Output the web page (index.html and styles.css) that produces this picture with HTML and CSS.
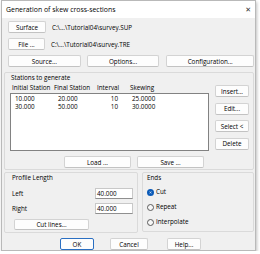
FILE: index.html
```html
<!DOCTYPE html>
<html>

<head>
    <title>Generation of skew cross-sections</title>
    <link rel="stylesheet" href="styles.css">
</head>

<body>
    <div class="window">
        <div class="titlebar">
            <span class="title">Generation of skew cross-sections</span>
            <span class="close">&#x2715;</span>
        </div>
        <div class="content">
            <div class="file-row">
                <button class="btn btn-surface">Surface</button>
                <span class="path">C:\...\Tutorial04\survey.SUP</span>
            </div>
            <div class="file-row">
                <button class="btn btn-file">File ...</button>
                <span class="path">C:\...\Tutorial04\survey.TRE</span>
            </div>
            <div class="tool-row">
                <button class="btn btn-source">Source...</button>
                <button class="btn btn-options">Options...</button>
                <button class="btn btn-config">Configuration...</button>
            </div>

            <div class="group stations">
                <div class="group-label">Stations to generate</div>
                <div class="stations-body">
                    <div class="table">
                        <div class="headers">
                            <span>Initial Station</span>
                            <span>Final Station</span>
                            <span>Interval</span>
                            <span>Skewing</span>
                        </div>
                        <div class="listbox">
                            <div class="list-row">
                                <span>10.000</span>
                                <span>20.000</span>
                                <span class="num">10</span>
                                <span class="skew">25.0000</span>
                            </div>
                            <div class="list-row">
                                <span>30.000</span>
                                <span>50.000</span>
                                <span class="num">10</span>
                                <span class="skew">30.0000</span>
                            </div>
                        </div>
                    </div>
                    <div class="side-buttons">
                        <button class="btn btn-side">Insert...</button>
                        <button class="btn btn-side">Edit...</button>
                        <button class="btn btn-side">Select &lt;</button>
                        <button class="btn btn-side">Delete</button>
                    </div>
                </div>
                <div class="load-save">
                    <button class="btn btn-io">Load ...</button>
                    <button class="btn btn-io">Save ...</button>
                </div>
            </div>

            <div class="lower">
                <div class="group profile">
                    <div class="group-label">Profile Length</div>
                    <div class="field">
                        <span>Left</span>
                        <div class="input">40.000</div>
                    </div>
                    <div class="field">
                        <span>Right</span>
                        <div class="input">40.000</div>
                    </div>
                    <button class="btn btn-cut">Cut lines...</button>
                </div>
                <div class="group ends">
                    <div class="group-label">Ends</div>
                    <label class="radio checked"><span class="dot"></span>Cut</label>
                    <label class="radio"><span class="dot"></span>Repeat</label>
                    <label class="radio"><span class="dot"></span>Interpolate</label>
                </div>
            </div>

            <div class="dialog-buttons">
                <button class="btn btn-ok">OK</button>
                <button class="btn btn-cancel">Cancel</button>
                <button class="btn btn-help">Help...</button>
            </div>
        </div>
    </div>
</body>

</html>
```

FILE: styles.css
```css
body {
    margin: 0;
    background-color: #ffffff;
    font-family: "Open Sans", "Liberation Sans", sans-serif;
    font-size: 6.3px;
    color: #000;
}

.window {
    box-sizing: border-box;
    width: 255px;
    height: 251px;
    margin-left: 1px;
    border: 1px solid #b9b9b9;
    background-color: #f0f0f0;
    box-shadow: 1px 2px 3px rgba(0, 0, 0, 0.25);
    display: flex;
    flex-direction: column;
}

.titlebar {
    height: 17px;
    background-color: #ffffff;
    display: flex;
    align-items: center;
    justify-content: space-between;
    padding: 0 4px 0 4px;
}

.title {
    font-size: 6.9px;
}

.close {
    font-size: 7px;
    color: #333;
    font-family: "DejaVu Sans", sans-serif;
}

.content {
    padding: 0 1px 0 2px;
}

.btn {
    box-sizing: border-box;
    height: 12px;
    padding: 0;
    font-family: inherit;
    font-size: 6.3px;
    color: #000;
    background-color: #fdfdfd;
    border: 1px solid #d3d3d3;
    border-bottom-color: #c2c2c2;
    border-radius: 2px;
}

.file-row {
    display: flex;
    align-items: center;
    margin: 3px 0 0 4px;
}

.file-row + .file-row {
    margin-top: 5px;
}

.btn-surface {
    width: 38px;
}

.btn-file {
    width: 37px;
}

.path {
    margin-left: 6px;
}

.tool-row {
    display: flex;
    margin: 5px 0 0 4px;
}

.btn-source,
.btn-options {
    width: 73px;
    margin-right: 6px;
}

.btn-config {
    width: 88px;
    margin-left: 1px;
}

.group {
    box-sizing: border-box;
    border: 1px solid #dadada;
    border-radius: 2px;
}

.group-label {
    line-height: 8px;
}

.stations {
    margin-top: 5px;
    height: 98px;
    padding: 1px 4px 0 6px;
}

.stations-body {
    display: flex;
    margin-top: 2px;
}

.table {
    width: 200px;
    margin-left: -1px;
}

.headers {
    display: grid;
    grid-template-columns: 42px 43px 33px 1fr;
    padding-left: 2px;
    line-height: 8px;
}

.listbox {
    box-sizing: border-box;
    height: 58px;
    margin-top: 1px;
    background-color: #fff;
    border: 1px solid #828282;
    padding: 1px 0 0 4px;
}

.list-row {
    display: grid;
    grid-template-columns: 43px 43px 17px 1fr;
    line-height: 7.8px;
}

.num {
    text-align: right;
}

.skew {
    padding-left: 14px;
}

.side-buttons {
    display: flex;
    flex-direction: column;
    gap: 5.5px;
    margin-left: 6px;
    margin-top: 1px;
}

.btn-side {
    width: 34px;
    height: 12px;
}

.load-save {
    display: flex;
    gap: 6px;
    margin: 5px 0 0 53px;
}

.btn-io {
    width: 67px;
}

.lower {
    display: flex;
    gap: 4px;
    margin-top: 2px;
}

.profile {
    width: 134px;
    height: 61px;
    padding: 1px 4px 0 7px;
}

.field {
    display: flex;
    justify-content: space-between;
    align-items: center;
    margin-top: 6px;
}

.field + .field {
    margin-top: 4px;
}

.input {
    box-sizing: border-box;
    width: 38px;
    height: 11px;
    background-color: #fff;
    border: 1px solid #8f8f8f;
    border-top-color: #c8c8c8;
    border-left-color: #c8c8c8;
    border-right-color: #c8c8c8;
    padding-left: 1px;
    line-height: 9px;
}

.btn-cut {
    width: 75px;
    height: 11px;
    margin: 5px 0 0 2px;
}

.ends {
    width: 112px;
    height: 60px;
    padding: 1px 4px 0 4px;
}

.radio {
    display: flex;
    align-items: center;
    gap: 2px;
    margin-top: 7px;
    line-height: 8px;
}

.ends .group-label + .radio {
    margin-top: 6px;
}

.dot {
    box-sizing: border-box;
    width: 7px;
    height: 7px;
    border-radius: 50%;
    border: 1px solid #5a5a5a;
    background-color: #f7f7f7;
}

.radio.checked .dot {
    border: 2px solid #0a5ab8;
    background-color: #fff;
    box-shadow: inset 0 0 0 1px #0a5ab8;
}

.dialog-buttons {
    display: flex;
    margin: 5px 0 0 56px;
}

.btn-ok {
    width: 34px;
    height: 12px;
    border: 1px solid #2a6fc2;
}

.btn-cancel {
    width: 38px;
    margin-left: 16px;
}

.btn-help {
    width: 34px;
    margin-left: 19px;
}
```
